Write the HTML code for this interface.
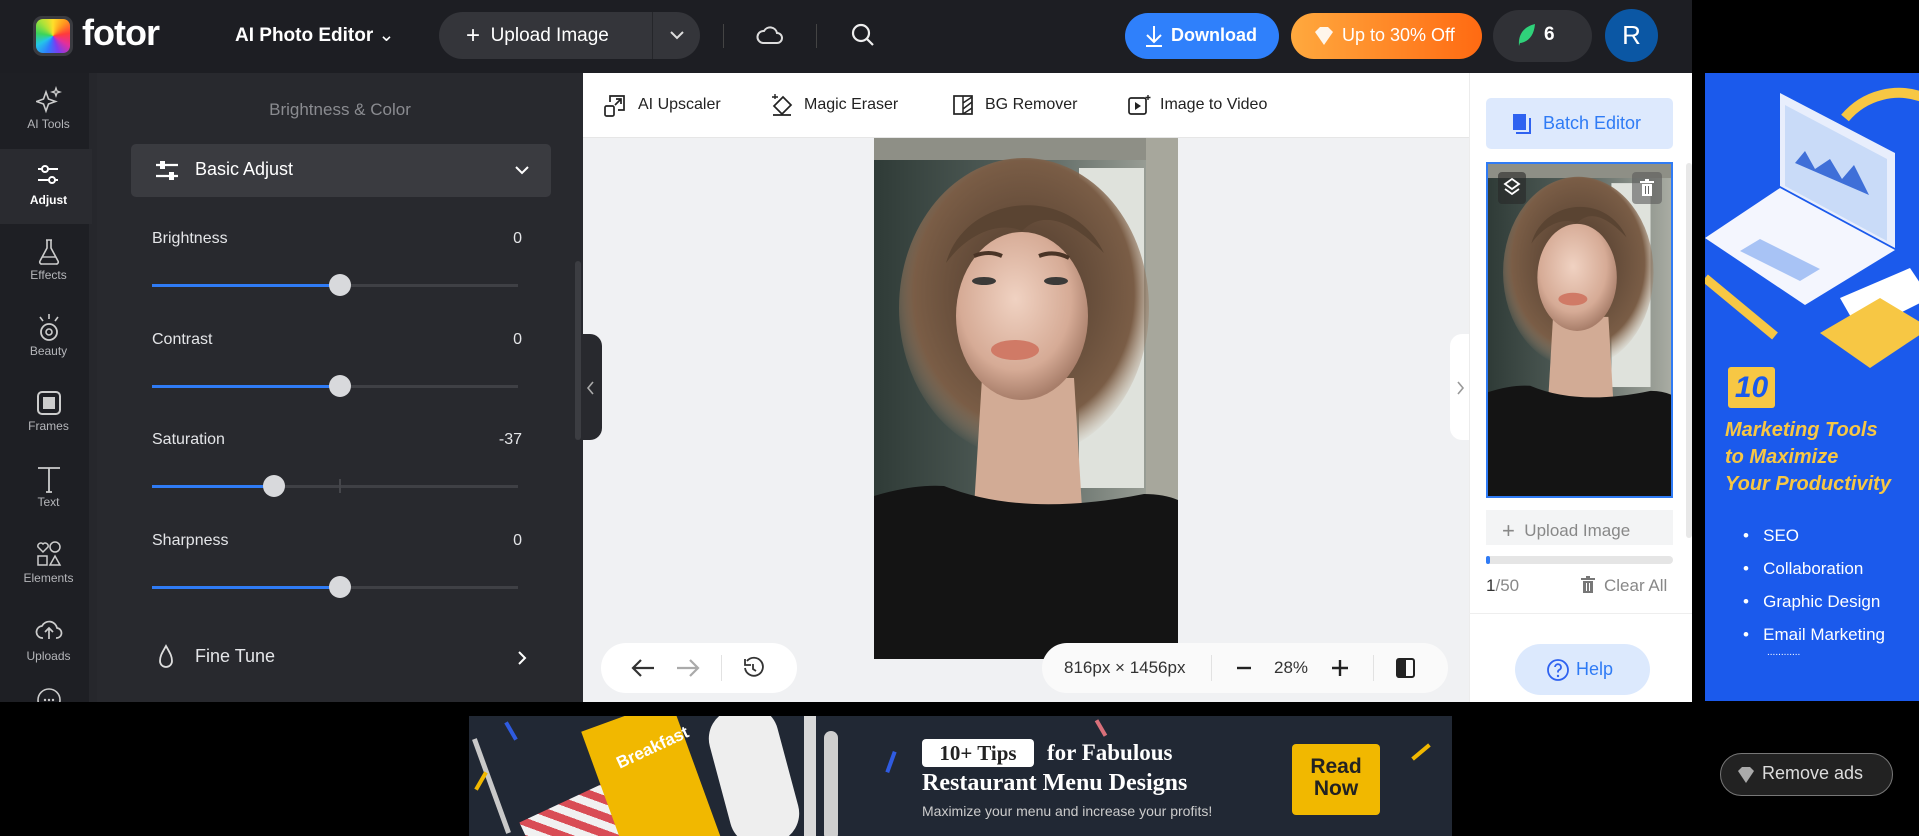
<!DOCTYPE html>
<html><head><meta charset="utf-8">
<style>
*{box-sizing:border-box;margin:0;padding:0}
html,body{width:1919px;height:836px;overflow:hidden}
body{background:#000;font-family:"Liberation Sans",sans-serif;position:relative}
.a{position:absolute}
.t{position:absolute;white-space:nowrap}
.rl{color:#b5b6ba;font-size:12px;width:97px;text-align:center;left:0}
.lab{color:#e4e5e8;font-size:16px;left:152px}
.val{color:#e4e5e8;font-size:16px;text-align:right}
.trk{position:absolute;left:152px;width:366px;height:3px;background:#3f4045}
.fill{position:absolute;left:0;top:0;height:3px;background:#2f7bf5}
.th{position:absolute;width:22px;height:22px;border-radius:50%;background:#d8d9dc;top:-10px}
.tb{font-size:16px;color:#222}
</style></head><body>
<!-- top bar -->
<div class="a" style="left:0;top:0;width:1692px;height:73px;background:#1d1e23"></div>
<div class="a" style="left:33px;top:16px;width:40px;height:40px;border-radius:9px;background:#3a3b40;padding:3px"><div style="width:34px;height:34px;border-radius:7px;background:conic-gradient(#ffdf2a,#ff9a1e,#ff3b3b,#e42f9a,#7b3cf0,#2e7bff,#24c6e8,#3bd45b,#a8e23a,#ffdf2a)"></div></div>
<div class="t" style="left:82px;top:12px;color:#fff;font-size:36px;font-weight:bold;letter-spacing:-1px">fotor</div>
<div class="t" style="left:235px;top:24px;color:#fff;font-size:19px;font-weight:bold">AI Photo Editor <span style="font-weight:normal">⌄</span></div>
<div class="a" style="left:439px;top:12px;width:261px;height:47px;border-radius:24px;background:#34353a"></div>
<div class="a" style="left:652px;top:12px;width:1px;height:47px;background:#25262a"></div>
<div class="t" style="left:466px;top:22px;color:#fff;font-size:19px"><span style="font-size:24px;vertical-align:-2px">+</span>&nbsp; Upload Image</div>
<svg class="a" style="left:668px;top:28px" width="18" height="14"><path d="M3 4l6 6 6-6" stroke="#ddd" stroke-width="2" fill="none"/></svg>
<div class="a" style="left:723px;top:24px;width:1px;height:24px;background:#444"></div>
<svg class="a" style="left:756px;top:22px" width="28" height="26"><path d="M7 21h14a5 5 0 0 0 0-10 7 7 0 0 0-13-2 6 6 0 0 0-1 12z" stroke="#ddd" stroke-width="2" fill="none"/></svg>
<div class="a" style="left:816px;top:24px;width:1px;height:24px;background:#444"></div>
<svg class="a" style="left:850px;top:22px" width="26" height="26"><circle cx="11" cy="11" r="8" stroke="#eee" stroke-width="2.2" fill="none"/><path d="M17 17l6 6" stroke="#eee" stroke-width="2.2"/></svg>
<div class="a" style="left:1125px;top:13px;width:154px;height:46px;border-radius:23px;background:#2f80fb"></div>
<svg class="a" style="left:1143px;top:24px" width="22" height="24"><path d="M11 2v15M4 11l7 7 7-7M3 22h16" stroke="#fff" stroke-width="2" fill="none"/></svg>
<div class="t" style="left:1171px;top:25px;color:#fff;font-size:18px;font-weight:bold">Download</div>
<div class="a" style="left:1291px;top:13px;width:191px;height:46px;border-radius:23px;background:linear-gradient(90deg,#ffa93e,#ff6a12)"></div>
<svg class="a" style="left:1312px;top:25px" width="24" height="22"><path d="M3 7l5-5h8l5 5-9 13z" fill="#fff" opacity=".9"/></svg>
<div class="t" style="left:1342px;top:25px;color:#fff;font-size:18px">Up to 30% Off</div>
<div class="a" style="left:1493px;top:10px;width:99px;height:52px;border-radius:26px;background:#303136"></div>
<svg class="a" style="left:1515px;top:22px" width="22" height="26"><path d="M4 24C3 13 8 5 20 2 19 14 13 20 5 21" fill="#2fd27a"/></svg>
<div class="t" style="left:1544px;top:24px;color:#fff;font-size:19px;font-weight:bold">6</div>
<div class="a" style="left:1605px;top:9px;width:53px;height:53px;border-radius:50%;background:#0b57a4;color:#fff;font-size:26px;text-align:center;line-height:53px">R</div>

<!-- left rail -->
<div class="a" style="left:0;top:73px;width:97px;height:629px;background:#1e1f24;overflow:hidden">
<div class="a" style="left:89px;top:0;width:8px;height:629px;background:#26272c"></div>
<div class="a" style="left:0;top:76px;width:92px;height:75px;background:#2a2b30"></div>
<svg class="a" style="left:36px;top:13px" width="26" height="28"><path d="M10 6l2.5 7 7 2.5-7 2.5-2.5 7-2.5-7-7-2.5 7-2.5z" stroke="#ccc" stroke-width="1.6" fill="none"/><path d="M20 2l1 3 3 1-3 1-1 3-1-3-3-1 3-1z" stroke="#ccc" stroke-width="1.3" fill="none"/></svg>
<div class="t rl" style="top:44px">AI Tools</div>
<svg class="a" style="left:36px;top:90px" width="26" height="24"><path d="M2 6h20M2 17h20" stroke="#fff" stroke-width="2"/><circle cx="9" cy="6" r="3" fill="#2a2b30" stroke="#fff" stroke-width="2"/><circle cx="16" cy="17" r="3" fill="#2a2b30" stroke="#fff" stroke-width="2"/></svg>
<div class="t rl" style="top:120px;color:#fff;font-weight:bold">Adjust</div>
<svg class="a" style="left:37px;top:165px" width="24" height="28"><path d="M9 2h6M10 2v8l-7 13a2 2 0 0 0 2 3h14a2 2 0 0 0 2-3l-7-13V2" stroke="#ccc" stroke-width="1.6" fill="none"/><path d="M5 19h14" stroke="#ccc" stroke-width="1.4"/></svg>
<div class="t rl" style="top:195px">Effects</div>
<svg class="a" style="left:35px;top:240px" width="28" height="30"><path d="M14 1v5M5 4l3 4M23 4l-3 4" stroke="#ccc" stroke-width="1.6"/><circle cx="14" cy="19" r="8" stroke="#ccc" stroke-width="1.8" fill="none"/><circle cx="14" cy="19" r="3" stroke="#ccc" stroke-width="1.6" fill="none"/></svg>
<div class="t rl" style="top:271px">Beauty</div>
<svg class="a" style="left:37px;top:317px" width="24" height="26"><rect x="1" y="2" width="22" height="22" rx="4" stroke="#ccc" stroke-width="2" fill="none"/><rect x="6" y="7" width="12" height="12" fill="#ccc"/></svg>
<div class="t rl" style="top:346px">Frames</div>
<svg class="a" style="left:36px;top:392px" width="26" height="28"><path d="M2 3h22M13 3v24M10 27h6" stroke="#ccc" stroke-width="1.8" fill="none"/></svg>
<div class="t rl" style="top:422px">Text</div>
<svg class="a" style="left:35px;top:467px" width="28" height="28"><path d="M8 12l-5-5a3 3 0 0 1 5-3 3 3 0 0 1 5 3z" stroke="#ccc" stroke-width="1.5" fill="none"/><circle cx="20" cy="7" r="5" stroke="#ccc" stroke-width="1.5" fill="none"/><rect x="3" y="16" width="9" height="9" stroke="#ccc" stroke-width="1.5" fill="none"/><path d="M20 16l5 9H15z" stroke="#ccc" stroke-width="1.5" fill="none"/></svg>
<div class="t rl" style="top:498px">Elements</div>
<svg class="a" style="left:35px;top:543px" width="28" height="26"><path d="M8 22a6 6 0 0 1-1-12 8 8 0 0 1 15 2 5 5 0 0 1-1 10" stroke="#ccc" stroke-width="1.7" fill="none"/><path d="M14 23V12M10 16l4-4 4 4" stroke="#ccc" stroke-width="1.7" fill="none"/></svg>
<div class="t rl" style="top:576px">Uploads</div>
<svg class="a" style="left:35px;top:613px" width="28" height="16"><circle cx="14" cy="14" r="11" stroke="#ccc" stroke-width="1.6" fill="none"/><circle cx="10" cy="14" r="1.2" fill="#ccc"/><circle cx="14" cy="14" r="1.2" fill="#ccc"/><circle cx="18" cy="14" r="1.2" fill="#ccc"/></svg>
</div>

<!-- panel -->
<div class="a" style="left:97px;top:73px;width:486px;height:629px;background:#28292e"></div>
<div class="a" style="left:575px;top:261px;width:6px;height:179px;border-radius:3px;background:#3c3d42"></div>
<div class="t" style="left:97px;width:486px;text-align:center;top:100px;color:#8a8b90;font-size:17px">Brightness &amp; Color</div>
<div class="a" style="left:131px;top:144px;width:420px;height:53px;border-radius:5px;background:#3a3b40"></div>
<svg class="a" style="left:154px;top:160px" width="26" height="22"><path d="M2 5h22M2 16h22" stroke="#fff" stroke-width="2.2"/><rect x="6" y="1" width="5" height="8" fill="#fff"/><rect x="15" y="12" width="5" height="8" fill="#fff"/></svg>
<div class="t" style="left:195px;top:159px;color:#fff;font-size:18px">Basic Adjust</div>
<svg class="a" style="left:514px;top:164px" width="16" height="12"><path d="M2 3l6 6 6-6" stroke="#fff" stroke-width="2" fill="none"/></svg>

<div class="t lab" style="top:230px">Brightness</div><div class="t val" style="top:230px;left:480px;width:42px">0</div>
<div class="trk" style="top:284px"><div class="fill" style="width:188px"></div><div class="th" style="left:177px"></div></div>
<div class="t lab" style="top:331px">Contrast</div><div class="t val" style="top:331px;left:480px;width:42px">0</div>
<div class="trk" style="top:385px"><div class="fill" style="width:188px"></div><div class="th" style="left:177px"></div></div>
<div class="t lab" style="top:431px">Saturation</div><div class="t val" style="top:431px;left:480px;width:42px">-37</div>
<div class="trk" style="top:485px"><div class="fill" style="width:122px"></div><div class="a" style="left:187px;top:-6px;width:2px;height:14px;background:#45464b"></div><div class="th" style="left:111px"></div></div>
<div class="t lab" style="top:532px">Sharpness</div><div class="t val" style="top:532px;left:480px;width:42px">0</div>
<div class="trk" style="top:586px"><div class="fill" style="width:188px"></div><div class="th" style="left:177px"></div></div>
<svg class="a" style="left:156px;top:644px" width="20" height="26"><path d="M10 2C6 9 4 12 4 17a6 6 0 0 0 12 0c0-5-2-8-6-15z" stroke="#ddd" stroke-width="1.8" fill="none"/></svg>
<div class="t" style="left:195px;top:646px;color:#e4e5e8;font-size:18px">Fine Tune</div>
<svg class="a" style="left:516px;top:650px" width="12" height="16"><path d="M3 2l6 6-6 6" stroke="#fff" stroke-width="2" fill="none"/></svg>

<!-- canvas -->
<div class="a" style="left:583px;top:73px;width:886px;height:629px;background:#f0f1f3"></div>
<div class="a" style="left:583px;top:73px;width:886px;height:65px;background:#fff;border-bottom:1px solid #e6e6e6"></div>
<svg class="a" style="left:604px;top:94px" width="22" height="24"><rect x="1" y="12" width="9" height="10" rx="1.5" stroke="#222" stroke-width="1.7" fill="none"/><path d="M6 8V2h14v14h-6M11 11l6-6M12 5h5v5" stroke="#222" stroke-width="1.7" fill="none"/></svg>
<div class="t tb" style="left:638px;top:96px">AI Upscaler</div>
<svg class="a" style="left:771px;top:93px" width="24" height="24"><path d="M3 13l9-9 8 8-9 9zM2 22h18" stroke="#222" stroke-width="1.7" fill="none"/><path d="M4 1v5M1 4h6" stroke="#222" stroke-width="1.4"/></svg>
<div class="t tb" style="left:804px;top:96px">Magic Eraser</div>
<svg class="a" style="left:952px;top:94px" width="22" height="22"><rect x="2" y="2" width="18" height="18" stroke="#222" stroke-width="1.7" fill="none"/><path d="M11 2v18M11 9l9-6M11 15l9-7M11 20l9-6" stroke="#222" stroke-width="1.5"/></svg>
<div class="t tb" style="left:985px;top:96px">BG Remover</div>
<svg class="a" style="left:1127px;top:94px" width="24" height="22"><rect x="2" y="4" width="17" height="16" rx="2" stroke="#222" stroke-width="1.7" fill="none"/><path d="M8 8v8l6-4z" fill="#222"/><path d="M21 1v5M18.5 3.5h5" stroke="#222" stroke-width="1.4"/></svg>
<div class="t tb" style="left:1160px;top:96px">Image to Video</div>

<svg class="a" style="left:874px;top:138px" width="304" height="521" viewBox="0 0 304 521" preserveAspectRatio="none">
<defs><radialGradient id="fg" cx=".45" cy=".4" r=".6"><stop offset="0" stop-color="#f0d2c2"/><stop offset=".7" stop-color="#d6ab96"/><stop offset="1" stop-color="#a87e6a"/></radialGradient>
<linearGradient id="bg" x1="0" x2="1"><stop offset="0" stop-color="#2f3b37"/><stop offset=".5" stop-color="#55615c"/><stop offset="1" stop-color="#a9aca3"/></linearGradient>
<radialGradient id="hg" cx=".5" cy=".45" r=".55"><stop offset="0" stop-color="#4a372a"/><stop offset=".8" stop-color="#7a5d46"/><stop offset="1" stop-color="#b09278" stop-opacity="0"/></radialGradient></defs>
<rect width="304" height="521" fill="url(#bg)"/>
<rect x="0" y="0" width="304" height="22" fill="#8e8f86"/>
<rect x="205" y="30" width="65" height="320" fill="#dfe2dc"/>
<rect x="272" y="0" width="32" height="360" fill="#a7a79c"/>
<ellipse cx="150" cy="170" rx="125" ry="150" fill="url(#hg)"/>
<path d="M108 240h92l8 130h-108z" fill="#d2ab95"/>
<ellipse cx="148" cy="178" rx="66" ry="84" fill="url(#fg)"/>
<path d="M72 125c20-70 125-80 158-10-30-30-60-45-82-22-22-10-54 2-76 32z" fill="#5a4432"/>
<ellipse cx="110" cy="143" rx="12" ry="4" fill="#3b3a38"/><ellipse cx="182" cy="143" rx="12" ry="4" fill="#3b3a38"/>
<path d="M100 118q15-6 28 0M165 118q15-6 30 2" stroke="#4a3426" stroke-width="4" fill="none"/>
<ellipse cx="141" cy="212" rx="24" ry="10" fill="#d07a66"/>
<path d="M0 358q40-12 70-10q80 32 200 8q20 0 34 6V521H0z" fill="#141414"/>
</svg>

<!-- left bottom pill -->
<div class="a" style="left:601px;top:643px;width:196px;height:50px;border-radius:25px;background:#fff"></div>
<svg class="a" style="left:630px;top:657px" width="26" height="22"><path d="M24 11H3M11 3l-8 8 8 8" stroke="#333" stroke-width="2.2" fill="none"/></svg>
<svg class="a" style="left:675px;top:657px" width="26" height="22"><path d="M2 11h21M15 3l8 8-8 8" stroke="#aaa" stroke-width="2.2" fill="none"/></svg>
<div class="a" style="left:721px;top:655px;width:1px;height:26px;background:#e2e2e2"></div>
<svg class="a" style="left:741px;top:656px" width="24" height="24"><path d="M6 5a9 9 0 1 1-2 7M4 3v6h6" stroke="#333" stroke-width="1.8" fill="none"/><path d="M12 8v5l3 2" stroke="#333" stroke-width="1.8" fill="none"/></svg>

<!-- right bottom pill -->
<div class="a" style="left:1042px;top:643px;width:406px;height:50px;border-radius:25px;background:#fafafa"></div>
<div class="t" style="left:1064px;top:658px;color:#333;font-size:17px">816px × 1456px</div>
<div class="a" style="left:1211px;top:655px;width:1px;height:26px;background:#e2e2e2"></div>
<svg class="a" style="left:1234px;top:660px" width="20" height="16"><path d="M3 8h14" stroke="#222" stroke-width="2.4"/></svg>
<div class="t" style="left:1274px;top:658px;color:#333;font-size:17px">28%</div>
<svg class="a" style="left:1330px;top:658px" width="20" height="20"><path d="M2 10h16M10 2v16" stroke="#222" stroke-width="2.4"/></svg>
<div class="a" style="left:1373px;top:655px;width:1px;height:26px;background:#e2e2e2"></div>
<svg class="a" style="left:1395px;top:656px" width="22" height="24"><rect x="2" y="3" width="17" height="18" rx="2" stroke="#222" stroke-width="2" fill="none"/><rect x="2" y="3" width="9" height="18" fill="#222"/></svg>

<!-- collapse tabs -->
<div class="a" style="left:583px;top:334px;width:19px;height:106px;background:#28292e;border-radius:0 12px 12px 0"></div>
<svg class="a" style="left:585px;top:380px" width="12" height="16"><path d="M8 2l-5 6 5 6" stroke="#aaa" stroke-width="1.6" fill="none"/></svg>
<div class="a" style="left:1450px;top:334px;width:19px;height:106px;background:#fff;border-radius:12px 0 0 12px"></div>
<svg class="a" style="left:1455px;top:380px" width="12" height="16"><path d="M3 2l5 6-5 6" stroke="#999" stroke-width="1.6" fill="none"/></svg>

<!-- right panel -->
<div class="a" style="left:1469px;top:73px;width:223px;height:629px;background:#fff;border-left:1px solid #ececec"></div>
<div class="a" style="left:1486px;top:98px;width:187px;height:51px;border-radius:5px;background:#dde9fd"></div>
<svg class="a" style="left:1512px;top:113px" width="20" height="22"><rect x="1" y="1" width="13" height="16" fill="#2f62f0"/><path d="M4 20h14V5" stroke="#2f62f0" stroke-width="2" fill="none"/></svg>
<div class="t" style="left:1543px;top:113px;color:#2f7bf5;font-size:18px">Batch Editor</div>
<div class="a" style="left:1686px;top:163px;width:6px;height:375px;border-radius:3px;background:#e8e8e8"></div>
<div class="a" style="left:1486px;top:162px;width:187px;height:336px;border:2px solid #2f7bf5;overflow:hidden">
<svg width="183" height="332" viewBox="0 0 304 521" preserveAspectRatio="none" style="display:block">
<rect width="304" height="521" fill="url(#bg)"/>
<rect x="0" y="0" width="304" height="22" fill="#8e8f86"/>
<rect x="205" y="30" width="65" height="320" fill="#dfe2dc"/>
<ellipse cx="150" cy="170" rx="125" ry="150" fill="url(#hg)"/>
<path d="M108 240h92l8 130h-108z" fill="#d2ab95"/>
<ellipse cx="148" cy="178" rx="66" ry="84" fill="url(#fg)"/>
<path d="M72 125c20-70 125-80 158-10-30-30-60-45-82-22-22-10-54 2-76 32z" fill="#5a4432"/>
<ellipse cx="141" cy="212" rx="24" ry="10" fill="#d07a66"/>
<path d="M0 358q40-12 70-10q80 32 200 8q20 0 34 6V521H0z" fill="#141414"/>
</svg></div>
<div class="a" style="left:1498px;top:172px;width:28px;height:32px;border-radius:4px;background:rgba(40,40,40,.6)"></div>
<svg class="a" style="left:1502px;top:177px" width="20" height="22"><path d="M10 2l7 5-7 5-7-5zM3 12l7 5 7-5" stroke="#fff" stroke-width="1.8" fill="none"/></svg>
<div class="a" style="left:1632px;top:172px;width:30px;height:32px;border-radius:4px;background:rgba(90,90,90,.6)"></div>
<svg class="a" style="left:1639px;top:178px" width="16" height="20"><path d="M1 4h14M6 2h4" stroke="#fff" stroke-width="2"/><rect x="3" y="6" width="10" height="12" fill="#fff"/><path d="M6.5 8v8M9.5 8v8" stroke="#666" stroke-width="1"/></svg>
<div class="a" style="left:1486px;top:510px;width:187px;height:35px;background:#f3f4f5"></div>
<div class="t" style="left:1502px;top:518px;color:#888;font-size:17px"><span style="font-size:22px;vertical-align:-2px">+</span>&nbsp; Upload Image</div>
<div class="a" style="left:1486px;top:556px;width:187px;height:8px;border-radius:4px;background:#e5e5e5"></div>
<div class="a" style="left:1486px;top:556px;width:4px;height:8px;border-radius:4px;background:#2f7bf5"></div>
<div class="t" style="left:1486px;top:576px;color:#888;font-size:17px"><span style="color:#333">1</span>/50</div>
<svg class="a" style="left:1580px;top:575px" width="16" height="20"><path d="M1 4h14M6 2h4" stroke="#777" stroke-width="2"/><rect x="3" y="6" width="10" height="12" fill="#777"/><path d="M6.5 8v8M9.5 8v8" stroke="#fff" stroke-width="1"/></svg>
<div class="t" style="left:1604px;top:576px;color:#888;font-size:17px">Clear All</div>
<div class="a" style="left:1469px;top:613px;width:223px;height:1px;background:#eee"></div>
<div class="a" style="left:1515px;top:644px;width:135px;height:51px;border-radius:26px;background:#dce9fd"></div>
<svg class="a" style="left:1546px;top:658px" width="24" height="24"><circle cx="12" cy="12" r="10" stroke="#2f62f0" stroke-width="1.8" fill="none"/><path d="M9 9a3 3 0 1 1 4 3c-1 .5-1 1-1 2.5" stroke="#2f62f0" stroke-width="1.8" fill="none"/><circle cx="12" cy="18" r="1.2" fill="#2f62f0"/></svg>
<div class="t" style="left:1576px;top:659px;color:#2f7bf5;font-size:18px">Help</div>

<!-- right ad -->
<div class="a" style="left:1705px;top:73px;width:214px;height:628px;background:#1b5aec;overflow:hidden">
<svg width="214" height="300" style="position:absolute;left:0;top:0">
<path d="M140 45a70 70 0 0 1 80-20" stroke="#f7c744" stroke-width="10" fill="none"/>
<path d="M75 20l115 60v95l-115-62z" fill="#e8eefc"/>
<path d="M80 32l102 54v82l-102-55z" fill="#c9dbf8"/>
<path d="M90 90l10-12 10 18 15-10 12 20 12-14 15 30" fill="#3f6fd8"/>
<path d="M0 165l75-50 115 62-90 55z" fill="#f4f6fe"/>
<path d="M35 178l60 30 20-12-60-30z" fill="#a8c3f5"/>
<path d="M0 205l70 58" stroke="#f7c744" stroke-width="9"/>
<path d="M135 225l70-30 20 30-70 35z" fill="#fff"/>
<path d="M115 260l60-35 50 30-60 40z" fill="#f7c744"/>
</svg>
<div class="a" style="left:23px;top:294px;width:47px;height:41px;background:#f7c744;border-radius:3px;color:#1b5aec;font-size:30px;font-weight:bold;font-style:italic;text-align:center;line-height:41px">10</div>
<div class="t" style="left:20px;top:344px;color:#f7c744;font-size:20px;font-weight:bold;font-style:italic;line-height:27px">Marketing Tools<br>to Maximize<br>Your Productivity</div>
<div class="t" style="left:38px;top:446px;color:#fff;font-size:17px;line-height:33px">•&nbsp;&nbsp; SEO<br>•&nbsp;&nbsp; Collaboration<br>•&nbsp;&nbsp; Graphic Design<br>•&nbsp;&nbsp; Email Marketing</div>
<div class="t" style="left:62px;top:574px;color:#fff;font-size:10px">............</div>
</div>

<!-- bottom ad -->
<div class="a" style="left:469px;top:716px;width:983px;height:120px;background:#212834;overflow:hidden">
<div class="a" style="left:20px;top:20px;width:5px;height:100px;background:#c9c9c9;transform:rotate(-20deg)"></div>
<div class="a" style="left:250px;top:-10px;width:70px;height:140px;background:#eee;border-radius:30px;transform:rotate(-15deg)"></div>
<div class="a" style="left:60px;top:80px;width:110px;height:70px;background:repeating-linear-gradient(45deg,#d94c55 0 8px,#f1f1f1 8px 16px);transform:rotate(-25deg)"></div>
<div class="a" style="left:135px;top:-5px;width:95px;height:150px;background:#f1b800;transform:rotate(-20deg)"></div>
<div class="t" style="left:145px;top:22px;color:#fff;font-size:17px;font-weight:bold;transform:rotate(-25deg)">Breakfast</div>
<div class="a" style="left:335px;top:-5px;width:12px;height:130px;background:#d8d8d8;border-radius:5px"></div>
<div class="a" style="left:355px;top:15px;width:14px;height:110px;background:#cfcfcf;border-radius:7px"></div>
<div class="a" style="left:453px;top:23px;width:112px;height:28px;border-radius:4px;background:#fff;color:#222;font-family:'Liberation Serif',serif;font-weight:bold;font-size:21px;text-align:center;line-height:28px">10+ Tips</div>
<div class="t" style="left:578px;top:24px;color:#fff;font-family:'Liberation Serif',serif;font-weight:bold;font-size:23px">for Fabulous</div>
<div class="t" style="left:453px;top:54px;color:#fff;font-family:'Liberation Serif',serif;font-weight:bold;font-size:24px">Restaurant Menu Designs</div>
<div class="t" style="left:453px;top:87px;color:#ccc;font-size:14px">Maximize your menu and increase your profits!</div>
<div class="a" style="left:823px;top:28px;width:88px;height:71px;border-radius:4px;background:#f1b800;color:#222;font-size:21px;font-weight:bold;text-align:center;line-height:22px;padding-top:12px">Read<br>Now</div>
<div class="a" style="left:420px;top:35px;width:4px;height:22px;background:#2f5be0;transform:rotate(20deg)"></div>
<div class="a" style="left:630px;top:3px;width:4px;height:18px;background:#d9707a;transform:rotate(-30deg)"></div>
<div class="a" style="left:950px;top:25px;width:4px;height:22px;background:#f1b800;transform:rotate(50deg)"></div>
<div class="a" style="left:40px;top:5px;width:4px;height:20px;background:#2f5be0;transform:rotate(-30deg)"></div>
<div class="a" style="left:10px;top:55px;width:4px;height:20px;background:#f1b800;transform:rotate(30deg)"></div>
</div>
<div class="a" style="left:1720px;top:753px;width:173px;height:43px;border-radius:22px;background:#222;border:1.5px solid #777"></div>
<svg class="a" style="left:1736px;top:765px" width="20" height="20"><path d="M2 6l4-4h8l4 4-8 12z" fill="#aaa"/></svg>
<div class="t" style="left:1762px;top:763px;color:#ddd;font-size:18px">Remove ads</div>
</body></html>
